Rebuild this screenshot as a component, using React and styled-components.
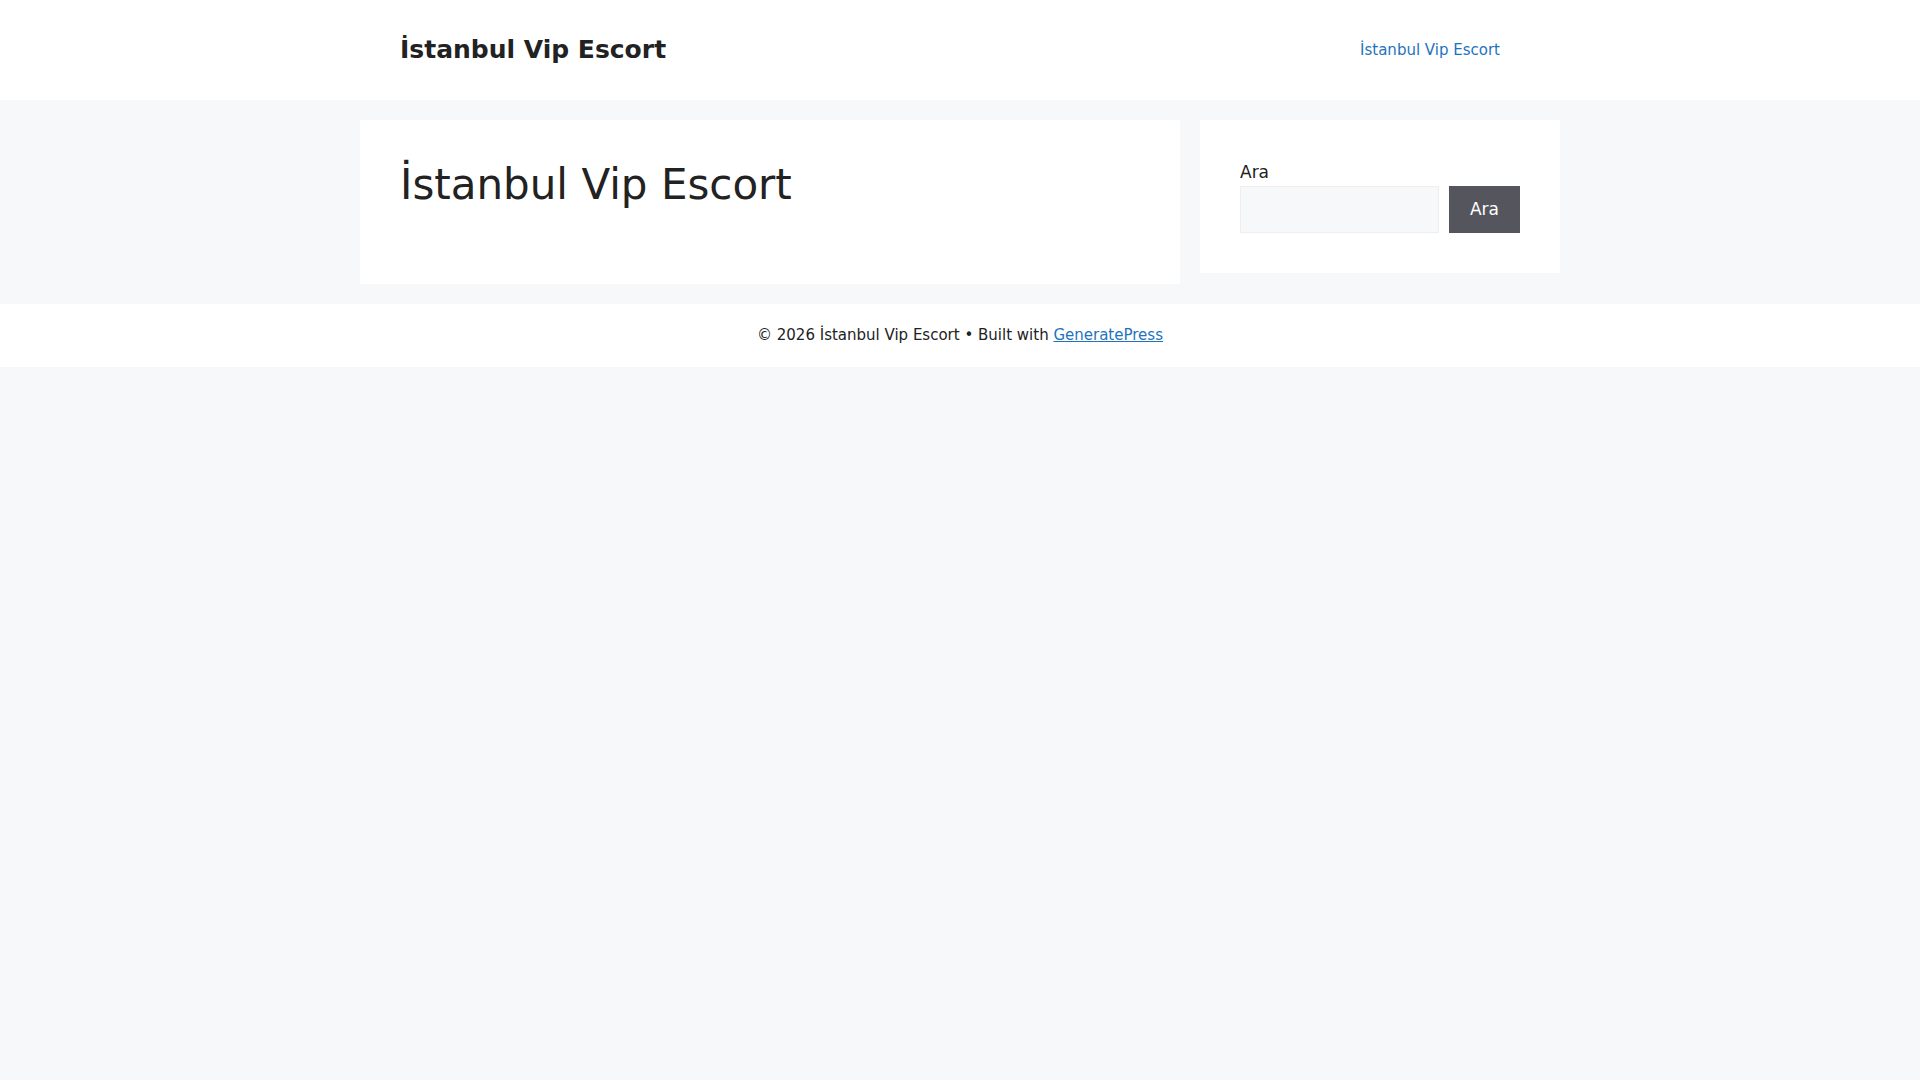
import React from "react";
import styled, { createGlobalStyle } from "styled-components";

const Global = createGlobalStyle`
  html, body { margin: 0; padding: 0; }
  body {
    background: #f7f8f9;
    color: #222222;
    font-family: "DejaVu Sans", sans-serif;
    font-size: 17px;
    line-height: 1.5;
    min-height: 1080px;
  }
  * { box-sizing: border-box; }
`;

const Header = styled.header`
  background: #ffffff;
`;

const HeaderInner = styled.div`
  max-width: 1200px;
  margin: 0 auto;
  padding: 20px 40px;
  display: flex;
  align-items: center;
  justify-content: space-between;
`;

const SiteTitle = styled.a`
  font-size: 25px;
  font-weight: 700;
  line-height: 1.2;
  color: #222222;
  text-decoration: none;
`;

const Nav = styled.nav`
  display: flex;
`;

const NavLink = styled.a`
  display: block;
  padding: 0 20px;
  line-height: 60px;
  font-size: 15px;
  color: #1e73be;
  text-decoration: none;
`;

const Site = styled.div`
  width: 1200px;
  margin: 20px auto;
  display: flex;
  gap: 20px;
  align-items: flex-start;
`;

const Content = styled.main`
  width: 820px;
  min-width: 0;
  flex: none;
  background: #ffffff;
  padding: 40px;
`;

const PageTitle = styled.h1`
  margin: 0 0 34px;
  font-size: 42px;
  font-weight: 400;
  line-height: 1.2;
`;

const Sidebar = styled.aside`
  width: 360px;
  min-width: 0;
  flex: none;
  background: #ffffff;
  padding: 40px;
`;

const Label = styled.label`
  display: block;
  line-height: 24px;
  padding-bottom: 2px;
`;

const SearchRow = styled.div`
  display: flex;
  gap: 10px;
`;

const Input = styled.input`
  flex: 1 1 0;
  width: 0;
  height: 47px;
  min-width: 0;
  background: #f7f8f9;
  border: 1px solid #eeeeee;
  padding: 10px 15px;
  font: inherit;
  color: #666;
`;

const Button = styled.button`
  flex: none;
  width: 71px;
  height: 47px;
  padding: 0;
  background: #55555e;
  color: #ffffff;
  border: 0;
  font: inherit;
  font-size: 17px;
`;

const Footer = styled.footer`
  background: #ffffff;
  padding: 20px;
  text-align: center;
  font-size: 15px;
  line-height: 23px;
  color: #222222;
`;

const FooterLink = styled.a`
  color: #1e73be;
`;

export default function App() {
  return (
    <>
      <Global />
      <Header>
        <HeaderInner>
          <SiteTitle href="#">İstanbul Vip Escort</SiteTitle>
          <Nav>
            <NavLink href="#">İstanbul Vip Escort</NavLink>
          </Nav>
        </HeaderInner>
      </Header>
      <Site>
        <Content>
          <PageTitle>İstanbul Vip Escort</PageTitle>
        </Content>
        <Sidebar>
          <Label htmlFor="s">Ara</Label>
          <SearchRow>
            <Input id="s" type="search" />
            <Button>Ara</Button>
          </SearchRow>
        </Sidebar>
      </Site>
      <Footer>
        © 2026 İstanbul Vip Escort • Built with <FooterLink href="#">GeneratePress</FooterLink>
      </Footer>
    </>
  );
}
